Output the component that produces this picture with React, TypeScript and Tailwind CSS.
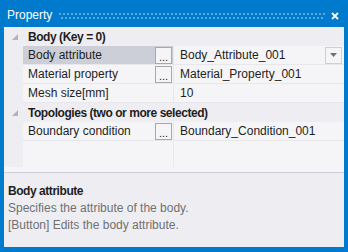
import React from "react";

const font = { fontFamily: '"Liberation Sans", Arial, sans-serif' };

function Category({ label }: { label: string }) {
  return (
    <div className="flex h-[19px] items-center bg-[#eeeef2]">
      <div className="flex w-[19px] h-full items-center justify-center">
        <svg width="6" height="6" viewBox="0 0 6 6" className="ml-[2px] mt-[1px]">
          <polygon points="6,0 6,6 0,6" fill="#b4b4b8" />
        </svg>
      </div>
      <div className="pl-[5px] font-bold tracking-[-0.45px] text-[#1e1e1e] text-[12px] leading-none">{label}</div>
    </div>
  );
}

function Prop({
  name,
  value,
  button,
  selected,
  dropdown,
}: {
  name: string;
  value: string;
  button?: boolean;
  selected?: boolean;
  dropdown?: boolean;
}) {
  return (
    <div className="flex h-[19px]">
      <div className="w-[19px] bg-[#eeeef2]" />
      <div
        className={
          "flex w-[150px] h-[18px] items-center border-b border-[#e8e8ec] box-content " +
          (selected ? "bg-[#ccced8]" : "bg-[#f5f5f7]")
        }
      >
        <div className="flex-1 pl-[5px] text-[12px] leading-none text-[#1e1e1e] whitespace-nowrap">{name}</div>
        {button && (
          <div className="mr-[1px] flex h-[17px] w-[17px] items-end justify-center border border-[#a8a8ac] bg-[#f5f5f7] text-[11px] leading-[12px] text-[#1e1e1e]">
            ...
          </div>
        )}
      </div>
      <div className="w-[1px] bg-[#e8e8ec]" />
      <div className="flex flex-1 h-[18px] items-center bg-[#f5f5f7] border-b border-[#e8e8ec] box-content">
        <div className="flex-1 pl-[6px] text-[12px] leading-none text-[#1e1e1e] whitespace-nowrap">{value}</div>
        {dropdown && (
          <div className="mr-[2px] flex h-[17px] w-[17px] items-center justify-center border border-[#cccedb] bg-[#f5f5f7]">
            <svg width="7" height="4" viewBox="0 0 7 4">
              <polygon points="0,0 7,0 3.5,4" fill="#717171" />
            </svg>
          </div>
        )}
      </div>
    </div>
  );
}

export default function App() {
  return (
    <div className="flex h-[252px] w-[348px] flex-col bg-[#007acc]" style={font}>
      <div className="flex h-[27px] items-center">
        <div className="pl-[7px] pt-[3px] text-[12px] leading-none text-white">Property</div>
        <div className="mx-[6px] mt-[4px] flex h-[8px] flex-1 flex-col justify-between py-[1px]">
          <div className="h-[2px] bg-[radial-gradient(circle,#5aaae0_0.9px,transparent_1px)] bg-[length:4px_2px]" />
          <div className="ml-[2px] h-[2px] bg-[radial-gradient(circle,#5aaae0_0.9px,transparent_1px)] bg-[length:4px_2px]" />
        </div>
        <div className="mr-[9px] mt-[4px] flex h-[8px] w-[8px] items-center justify-center">
          <svg width="8" height="8" viewBox="0 0 8 8">
            <path d="M1 1 L7 7 M7 1 L1 7" stroke="#ffffff" strokeWidth="1.8" />
          </svg>
        </div>
      </div>
      <div className="mx-[4px] mb-[5px] flex flex-1 flex-col bg-[#f5f5f7]">
        <div className="flex h-[145px] flex-col">
          <Category label="Body (Key = 0)" />
          <Prop name="Body attribute" value="Body_Attribute_001" button selected dropdown />
          <Prop name="Material property" value="Material_Property_001" button />
          <Prop name="Mesh size[mm]" value="10" />
          <Category label="Topologies (two or more selected)" />
          <Prop name="Boundary condition" value="Boundary_Condition_001" button />
          <div className="flex h-[26px]">
            <div className="w-[19px] bg-[#eeeef2]" />
            <div className="w-[150px] bg-[#f5f5f7]" />
            <div className="w-[1px] bg-[#e8e8ec]" />
            <div className="flex-1 bg-[#f5f5f7]" />
          </div>
        </div>
        <div className="h-[1px] bg-[#cccedb]" />
        <div className="flex flex-1 flex-col bg-[#eeeef2] pl-[4px] pt-[10px]">
          <div className="text-[12px] font-bold tracking-[-0.45px] leading-[17px] text-[#1e1e1e]">Body attribute</div>
          <div className="text-[12px] leading-[16.5px] text-[#717171]">Specifies the attribute of the body.</div>
          <div className="text-[12px] leading-[16.5px] text-[#717171]">[Button] Edits the body attribute.</div>
        </div>
      </div>
    </div>
  );
}
